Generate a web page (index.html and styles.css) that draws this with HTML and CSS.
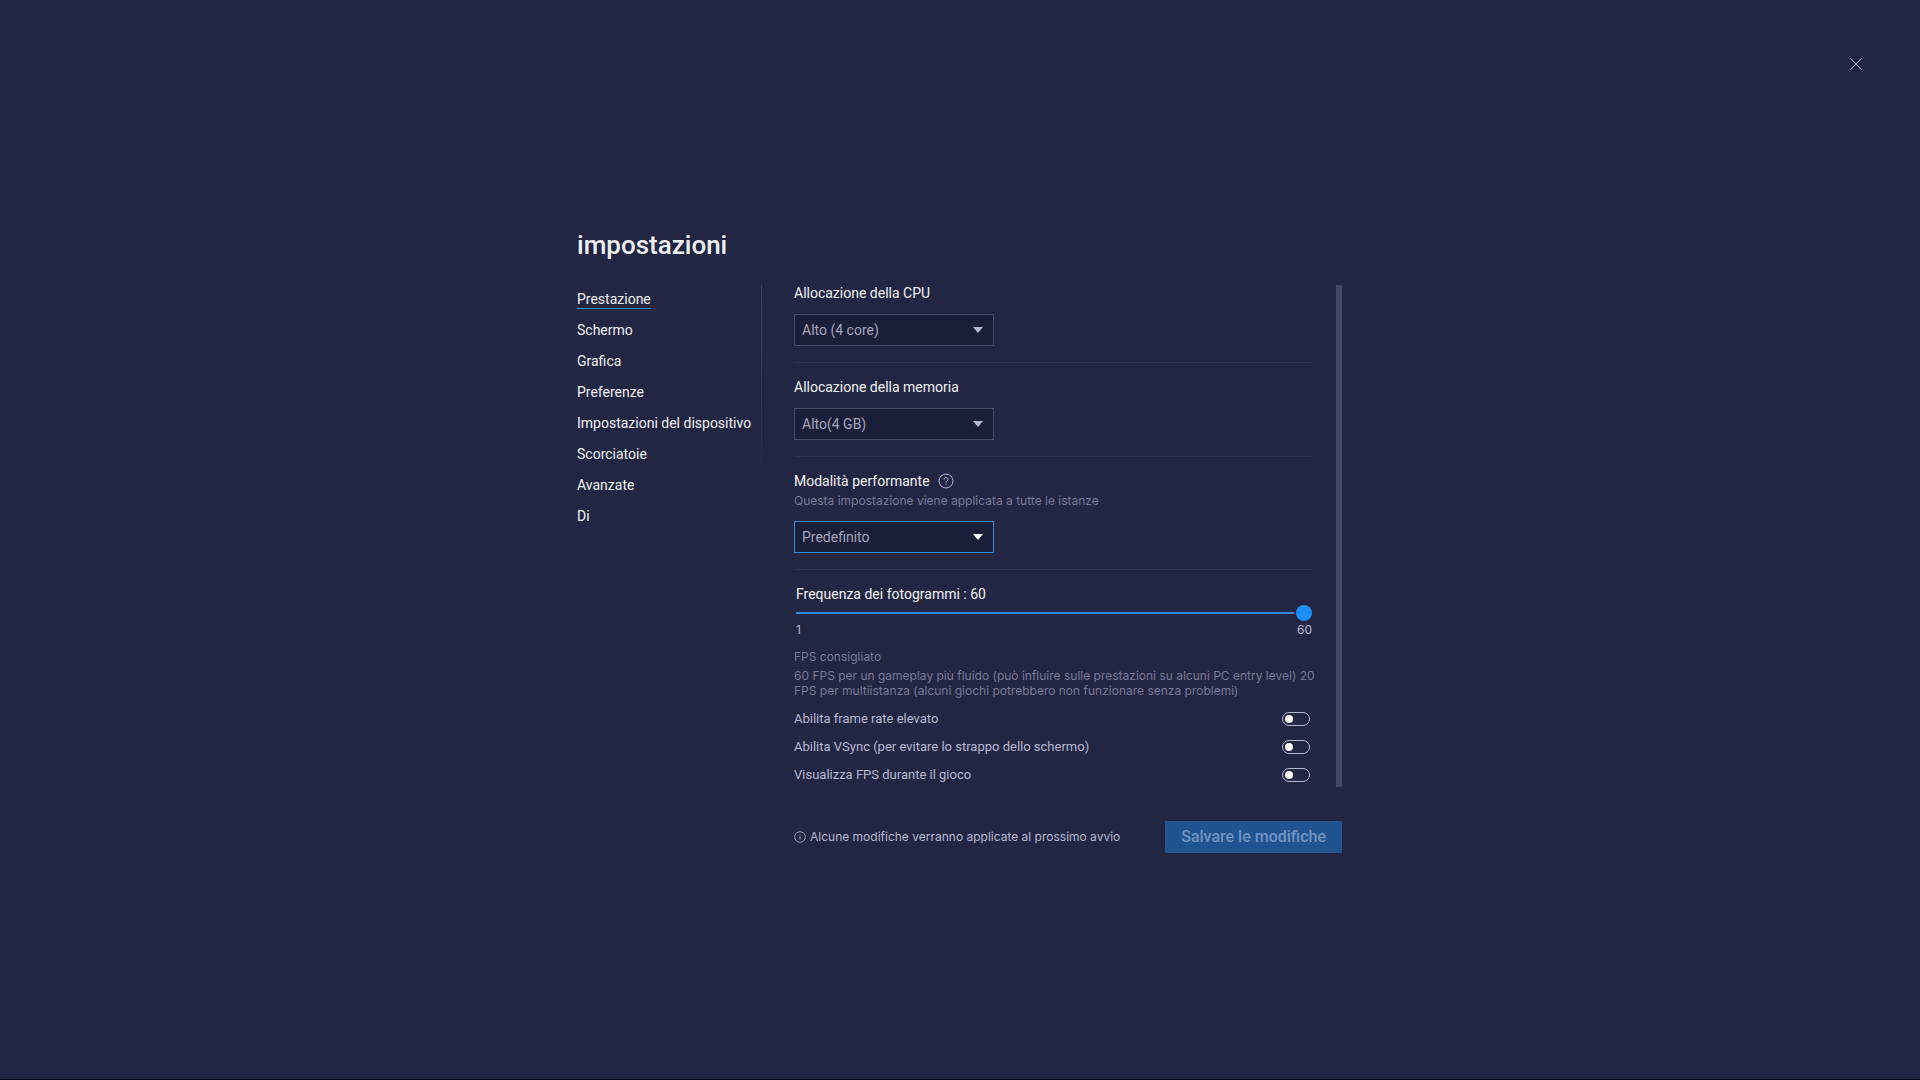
FILE: index.html
```html
<!DOCTYPE html>
<html lang="it">
<head>
<meta charset="utf-8">
<meta name="viewport" content="width=device-width, initial-scale=1">
<title>impostazioni</title>
<link rel="stylesheet" href="styles.css">
</head>
<body>
<button class="close" type="button" aria-label="Chiudi">
  <svg width="14" height="14" viewBox="0 0 14 14" fill="none" stroke="currentColor"><path d="M1 1l12 12M13 1L1 13"/></svg>
</button>
<main class="settings">
  <h1 class="title">impostazioni</h1>
  <div class="body">
    <nav class="sidebar">
      <a class="nav-link active" href="#prestazione">Prestazione</a>
      <a class="nav-link" href="#schermo">Schermo</a>
      <a class="nav-link" href="#grafica">Grafica</a>
      <a class="nav-link" href="#preferenze">Preferenze</a>
      <a class="nav-link" href="#dispositivo">Impostazioni del dispositivo</a>
      <a class="nav-link" href="#scorciatoie">Scorciatoie</a>
      <a class="nav-link" href="#avanzate">Avanzate</a>
      <a class="nav-link" href="#di">Di</a>
    </nav>
    <div class="panel">
      <section class="group">
        <label class="label" for="cpu">Allocazione della CPU</label>
        <div class="dropdown"><select id="cpu"><option>Alto (4 core)</option></select></div>
      </section>
      <section class="group">
        <label class="label" for="memory">Allocazione della memoria</label>
        <div class="dropdown"><select id="memory"><option>Alto(4 GB)</option></select></div>
      </section>
      <section class="group">
        <div class="label-row">
          <label class="label" for="mode">Modalità performante</label>
          <svg class="help" width="16" height="16" viewBox="0 0 16 16" fill="none" stroke="currentColor"><circle cx="8" cy="8" r="7"/><path d="M6 6.500c0-1.200.8-2 2-2s2 .8 2 1.800c0 1.400-2 1.500-2 3.200M8 10.700v1.200"/></svg>
        </div>
        <p class="hint">Questa impostazione viene applicata a tutte le istanze</p>
        <div class="dropdown focused"><select id="mode"><option>Predefinito</option></select></div>
      </section>
      <section class="group">
        <div class="slider">
          <label class="label" for="fps">Frequenza dei fotogrammi : 60</label>
          <input id="fps" type="range" min="1" max="60" value="60">
          <div class="limits"><span>1</span><span>60</span></div>
        </div>
        <p class="advice-title">FPS consigliato</p>
        <p class="advice">60 FPS per un gameplay più fluido (può influire sulle prestazioni su alcuni PC entry level) 20<br>FPS per multiistanza (alcuni giochi potrebbero non funzionare senza problemi)</p>
        <div class="toggles">
          <label class="toggle">Abilita frame rate elevato<input type="checkbox"></label>
          <label class="toggle">Abilita VSync (per evitare lo strappo dello schermo)<input type="checkbox"></label>
          <label class="toggle">Visualizza FPS durante il gioco<input type="checkbox"></label>
        </div>
      </section>
    </div>
    <div class="scrollbar"></div>
  </div>
  <footer class="footer">
    <p class="notice">
      <svg width="12" height="12" viewBox="0 0 12 12" fill="none" stroke="currentColor" stroke-width=".8"><circle cx="6" cy="6" r="5.300"/><path d="M6 5.200v3.600M6 3.200v1"/></svg>
      Alcune modifiche verranno applicate al prossimo avvio
    </p>
    <button class="save" type="button" disabled>Salvare le modifiche</button>
  </footer>
</main>
</body>
</html>
```
FILE: styles.css
```css
:root {
  --bg: #232642;
  --field: #1b1e38;
  --edge: #484a68;
  --rule: #2d3050;
  --accent: #338ade;
  --text: #f0f1f8;
  --soft: #b6b8d2;
  --muted: #787a98;
  --small: 12px/16px Inter, Roboto, sans-serif;
}

* {
  box-sizing: border-box;
}

body {
  margin: 0;
  min-height: 100vh;
  display: flex;
  align-items: center;
  justify-content: center;
  background: var(--bg);
  border-bottom: 1px solid #05061c;
  color: var(--text);
  font: 14px/16px Roboto, "Liberation Sans", sans-serif;
}

p {
  margin: 0;
}

button,
select {
  font: inherit;
}

svg {
  display: block;
  flex: none;
}

.close {
  position: absolute;
  top: 56px;
  right: 56px;
  padding: 1px;
  border: 0;
  background: none;
  color: var(--soft);
}

.settings {
  width: 100%;
  max-width: 766px;
  padding-right: 1px;
}

.title {
  margin: 0 0 20px;
  font-size: 26px;
  font-weight: 500;
  line-height: 39px;
}

.body {
  display: flex;
}

.sidebar {
  display: flex;
  flex: none;
  flex-direction: column;
  align-items: flex-start;
  gap: 13px;
  width: 185px;
  padding-top: 6px;
  background: linear-gradient(#3a3d5c, var(--bg)) right top / 1px 235px no-repeat;
}

.nav-link {
  border-bottom: 1px solid transparent;
  padding-bottom: 1px;
  color: var(--text);
  text-decoration: none;
  white-space: nowrap;
}

.nav-link.active {
  border-color: var(--accent);
}

.panel {
  flex: 1;
  min-width: 0;
  margin: 0 23px 0 32px;
  padding-bottom: 5px;
}

.group + .group {
  margin-top: 16px;
  padding-top: 16px;
  border-top: 1px solid var(--rule);
}

.label {
  display: block;
}

.label-row {
  display: flex;
  gap: 8px;
}

.help {
  color: var(--soft);
}

.hint {
  margin-top: 4px;
  color: var(--muted);
  font: var(--small);
}

.dropdown {
  display: grid;
  align-items: center;
  width: 200px;
  margin-top: 13px;
  color: var(--soft);
}

.hint + .dropdown {
  margin-top: 12px;
}

.dropdown select {
  grid-area: 1 / 1;
  width: 100%;
  height: 32px;
  padding: 0 7px;
  border: 1px solid var(--edge);
  border-radius: 0;
  background: var(--field);
  color: #a3a5bd;
  appearance: none;
}

.dropdown::after {
  content: "";
  grid-area: 1 / 1;
  justify-self: end;
  width: 10px;
  height: 6px;
  margin-right: 11px;
  background: currentColor;
  clip-path: polygon(0 0, 100% 0, 50% 100%);
  pointer-events: none;
  z-index: 1;
}

.dropdown.focused {
  color: #fff;
}

.focused select {
  border-color: var(--accent);
}

.slider {
  margin: 0 1px 0 2px;
}

.slider input {
  display: block;
  width: 100%;
  height: 16px;
  margin: 3px 0 1px;
  background: none;
  appearance: none;
}

.slider input::-webkit-slider-runnable-track {
  height: 2px;
  background: var(--accent);
}

.slider input::-webkit-slider-thumb {
  width: 16px;
  height: 16px;
  margin-top: -7px;
  border-radius: 50%;
  background: #1a8fff;
  box-shadow: 0 0 0 2px var(--bg);
  appearance: none;
}

.limits {
  display: flex;
  justify-content: space-between;
  color: var(--soft);
  font: var(--small);
}

.advice-title {
  margin-top: 11px;
  color: var(--muted);
  font: var(--small);
}

.advice {
  margin-top: 3px;
  color: var(--muted);
  font: var(--small);
  line-height: 15px;
  white-space: nowrap;
}

.toggles {
  display: grid;
  gap: 14px;
  margin: 14px 3px 0 0;
}

.toggle {
  display: flex;
  align-items: center;
  justify-content: space-between;
  height: 14px;
  color: var(--soft);
  font-size: 13px;
}

.toggle input {
  display: flex;
  align-items: center;
  width: 28px;
  height: 14px;
  margin: 0;
  padding: 0 2px;
  border: 1px solid var(--soft);
  border-radius: 7px;
  appearance: none;
}

.toggle input::before {
  content: "";
  width: 8px;
  height: 8px;
  border-radius: 50%;
  background: #fff;
}

.scrollbar {
  flex: none;
  width: 6px;
  background: #454767;
}

.footer {
  display: flex;
  align-items: center;
  justify-content: space-between;
  margin: 34px 0 0 217px;
}

.notice {
  display: flex;
  align-items: center;
  gap: 4px;
  color: var(--soft);
  font: var(--small);
}

.save {
  height: 32px;
  padding: 0 16px;
  border: 0;
  background: #1f5490;
  color: #7095c4;
  font-size: 16px;
  font-weight: 500;
}
```
